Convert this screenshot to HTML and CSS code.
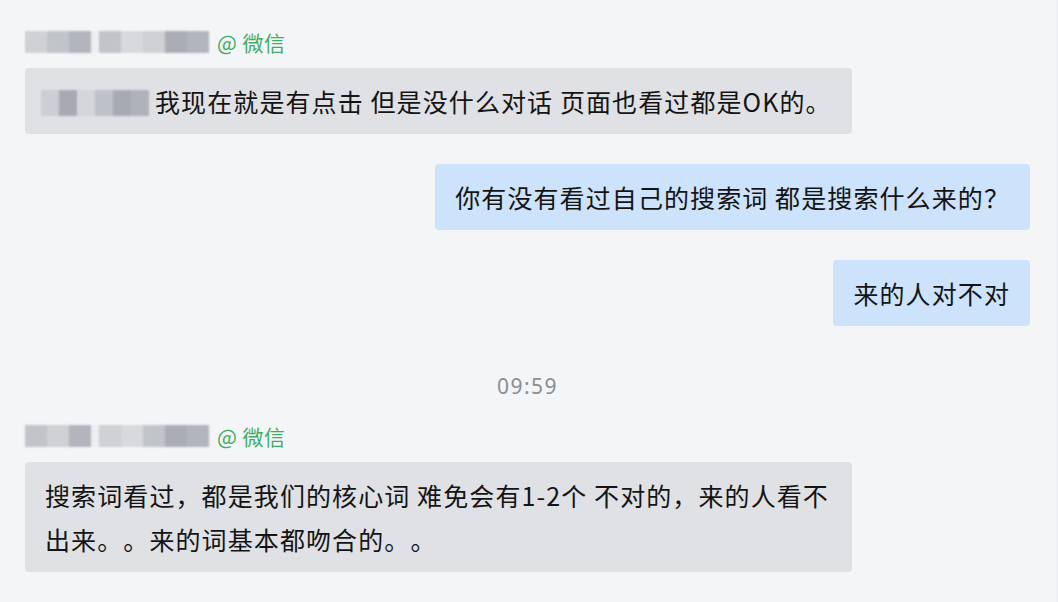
FILE: index.html
```html
<!DOCTYPE html>
<html lang="zh-CN">
<head>
    <meta charset="UTF-8">
    <meta name="viewport" content="width=device-width, initial-scale=1.0">
    <title>聊天记录</title>
    <link rel="stylesheet" href="styles.css">
</head>
<body>
    <div class="chat">
        <div class="sender">
            <span class="mosaic">
                <i class="m1"></i><i class="m2"></i><i class="m3"></i><i class="gap"></i><i class="m2"></i><i class="m4"></i><i class="m1"></i><i class="m5"></i><i class="m3"></i>
            </span>
            <span class="source">@ 微信</span>
        </div>
        <div class="row">
            <div class="bubble received">
                <span class="mosaic inline">
                    <i class="m1"></i><i class="m5"></i><i class="m4"></i><i class="m2"></i><i class="m5"></i><i class="m3"></i>
                </span>我现在就是有点击 但是没什么对话 页面也看过都是OK的。
            </div>
        </div>

        <div class="row mine">
            <div class="bubble sent">你有没有看过自己的搜索词 都是搜索什么来的？</div>
        </div>
        <div class="row mine">
            <div class="bubble sent">来的人对不对</div>
        </div>

        <div class="time">09:59</div>

        <div class="sender">
            <span class="mosaic">
                <i class="m2"></i><i class="m1"></i><i class="m3"></i><i class="gap"></i><i class="m1"></i><i class="m4"></i><i class="m2"></i><i class="m5"></i><i class="m3"></i>
            </span>
            <span class="source">@ 微信</span>
        </div>
        <div class="row">
            <div class="bubble received">搜索词看过，都是我们的核心词 难免会有1-2个 不对的，来的人看不出来。。来的词基本都吻合的。。</div>
        </div>
    </div>
</body>
</html>
```

FILE: styles.css
```css
html, body {
    margin: 0;
    height: 100%;
}

body {
    background-color: #f4f5f7;
    font-family: "Noto Sans CJK SC", "Noto Sans", sans-serif;
    color: #141414;
}

.chat {
    padding: 30px 27px 0 25px;
    border-right: 1px solid #e8eaed;
    min-height: 100%;
    box-sizing: border-box;
}

.sender {
    display: flex;
    align-items: center;
    gap: 8px;
    height: 24px;
    margin-bottom: 14px;
}

.mosaic {
    display: flex;
    height: 22px;
    filter: blur(1.2px);
    opacity: 0.85;
}

.mosaic i {
    display: block;
    height: 100%;
    width: 22px;
}

.mosaic .m1 { background-color: #c9cbd0; }
.mosaic .m2 { background-color: #b9bcc2; }
.mosaic .m3 { background-color: #a7aab1; }
.mosaic .m4 { background-color: #d3d5d9; }
.mosaic .m5 { background-color: #9ea1a8; }
.mosaic .gap { width: 8px; background-color: #eceef1; }

.mosaic.inline {
    display: inline-flex;
    vertical-align: middle;
    height: 26px;
    margin: 0 6px 4px -4px;
}

.mosaic.inline i {
    width: 18px;
}

.source {
    font-size: 21px;
    color: #3fae65;
    letter-spacing: 0.5px;
}

.row {
    display: flex;
}

.row.mine {
    justify-content: flex-end;
    margin-top: 30px;
}

.bubble {
    max-width: 827px;
    box-sizing: border-box;
    padding: 11px 20px;
    font-size: 25px;
    line-height: 44px;
    letter-spacing: 1.1px;
    text-spacing-trim: space-all;
    border-radius: 4px;
}

.received {
    background-color: #dfe1e5;
}

.sent {
    background-color: #cde2fb;
}

.time {
    margin-top: 45px;
    margin-bottom: 23px;
    text-align: center;
    font-size: 21px;
    line-height: 30px;
    letter-spacing: 1.5px;
    color: #8c8e92;
    font-family: "Noto Sans", "Open Sans", sans-serif;
}
```
